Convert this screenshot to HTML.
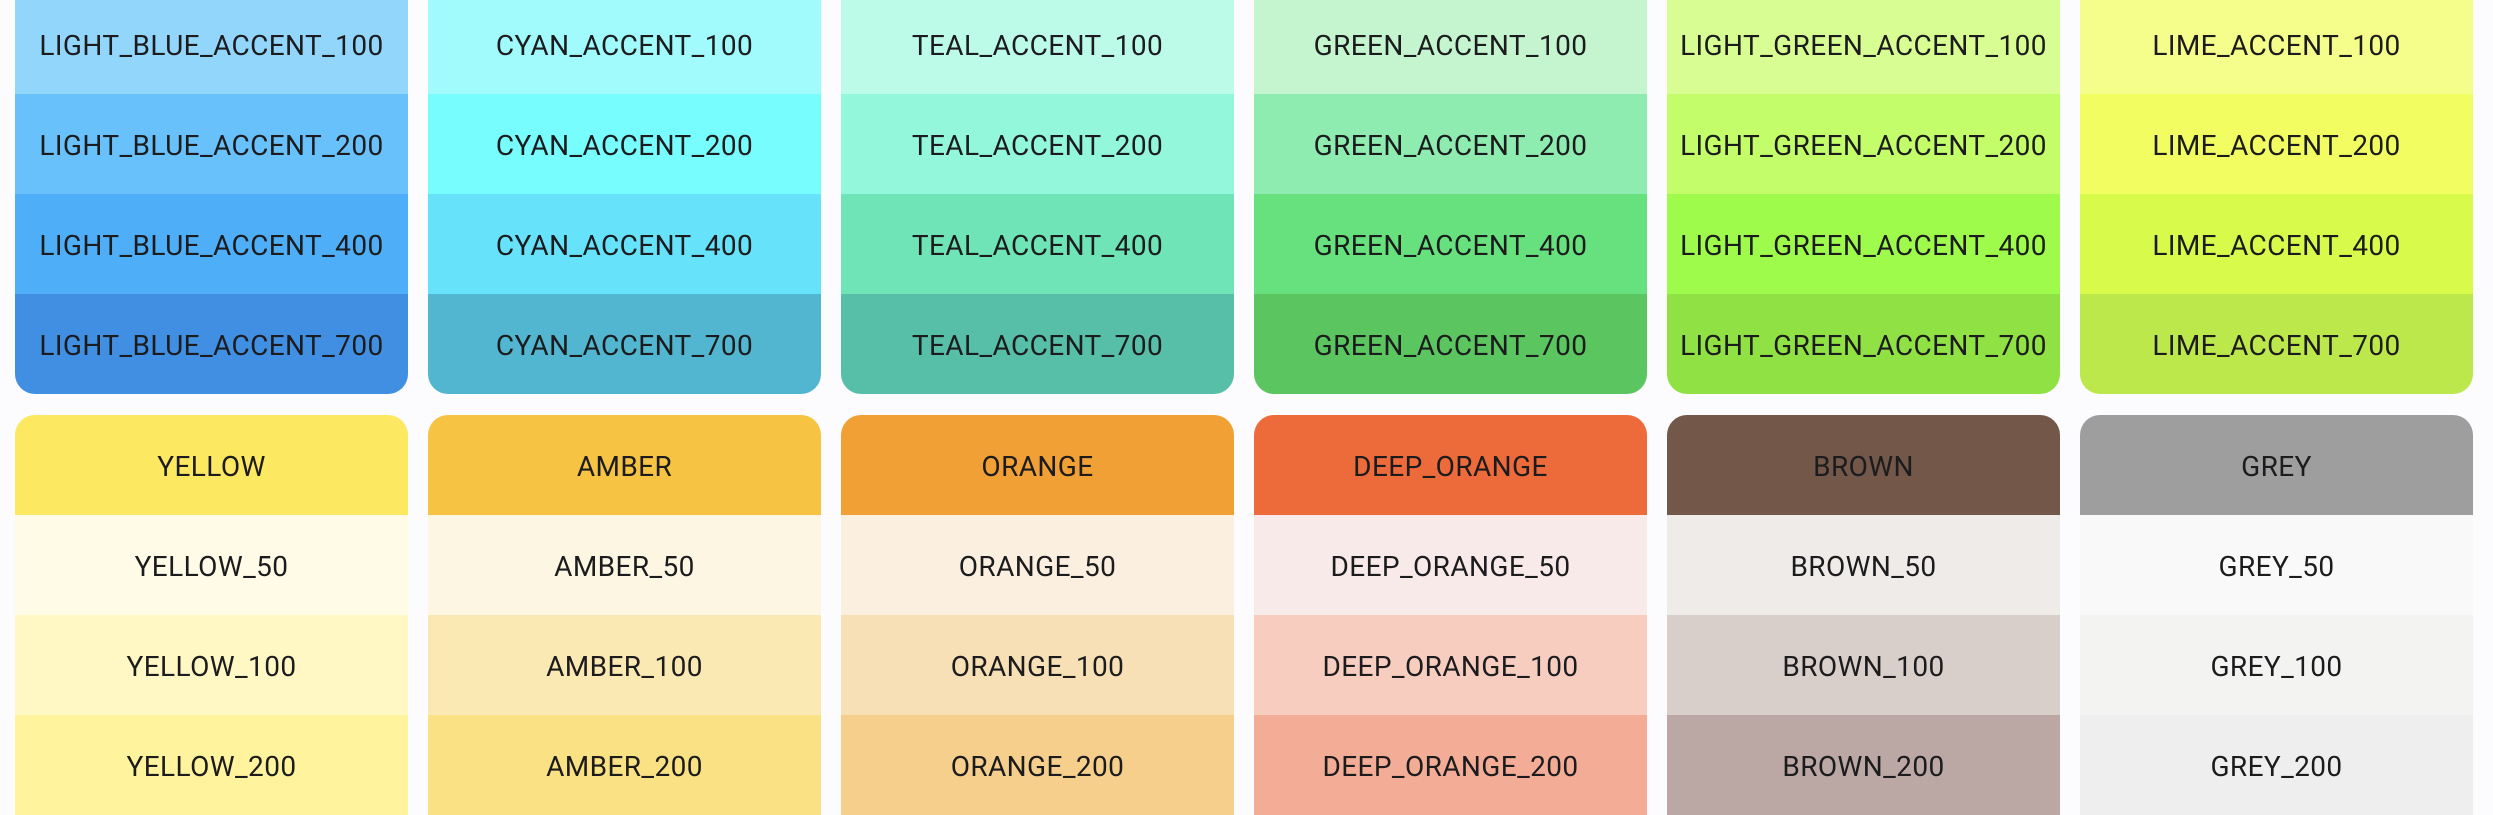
<!DOCTYPE html>
<html><head><meta charset="utf-8"><style>
body{margin:0;width:2493px;height:815px;background:#fcfbfd;position:relative;overflow:hidden;font-family:"Roboto","Liberation Sans",sans-serif}
.card{position:absolute;width:393px;overflow:hidden}
.r{height:100px;box-sizing:border-box;padding-top:3px;display:flex;align-items:center;justify-content:center;font-size:28px;color:#1c1c1e;letter-spacing:0.4px}
.top{top:-6px;border-radius:0 0 20px 20px}
.bot{top:415px;border-radius:20px 20px 0 0}
</style></head><body>
<div class="card top" style="left:15px"><div class="r" style="background:#93d6fc">LIGHT_BLUE_ACCENT_100</div><div class="r" style="background:#68c1fa">LIGHT_BLUE_ACCENT_200</div><div class="r" style="background:#4faef8">LIGHT_BLUE_ACCENT_400</div><div class="r" style="background:#418fe3">LIGHT_BLUE_ACCENT_700</div></div>
<div class="card top" style="left:428px"><div class="r" style="background:#a1fbfc">CYAN_ACCENT_100</div><div class="r" style="background:#77fdfd">CYAN_ACCENT_200</div><div class="r" style="background:#67e2fb">CYAN_ACCENT_400</div><div class="r" style="background:#52b6d0">CYAN_ACCENT_700</div></div>
<div class="card top" style="left:841px"><div class="r" style="background:#bcfbe8">TEAL_ACCENT_100</div><div class="r" style="background:#93f7db">TEAL_ACCENT_200</div><div class="r" style="background:#6ee4b7">TEAL_ACCENT_400</div><div class="r" style="background:#57bea7">TEAL_ACCENT_700</div></div>
<div class="card top" style="left:1254px"><div class="r" style="background:#c4f5cf">GREEN_ACCENT_100</div><div class="r" style="background:#8eecb0">GREEN_ACCENT_200</div><div class="r" style="background:#67e17d">GREEN_ACCENT_400</div><div class="r" style="background:#5bc55f">GREEN_ACCENT_700</div></div>
<div class="card top" style="left:1667px"><div class="r" style="background:#d7fd93">LIGHT_GREEN_ACCENT_100</div><div class="r" style="background:#c3fd69">LIGHT_GREEN_ACCENT_200</div><div class="r" style="background:#9efb4b">LIGHT_GREEN_ACCENT_400</div><div class="r" style="background:#90e143">LIGHT_GREEN_ACCENT_700</div></div>
<div class="card top" style="left:2080px"><div class="r" style="background:#f5fd8b">LIME_ACCENT_100</div><div class="r" style="background:#f1fd60">LIME_ACCENT_200</div><div class="r" style="background:#d8fb4b">LIME_ACCENT_400</div><div class="r" style="background:#bde84c">LIME_ACCENT_700</div></div>

<div class="card bot" style="left:15px"><div class="r" style="background:#fde862">YELLOW</div><div class="r" style="background:#fffbe6">YELLOW_50</div><div class="r" style="background:#fff8c5">YELLOW_100</div><div class="r" style="background:#fff49d">YELLOW_200</div></div>
<div class="card bot" style="left:428px"><div class="r" style="background:#f6c343">AMBER</div><div class="r" style="background:#fdf6e2">AMBER_50</div><div class="r" style="background:#fbe9b3">AMBER_100</div><div class="r" style="background:#fae184">AMBER_200</div></div>
<div class="card bot" style="left:841px"><div class="r" style="background:#f0a035">ORANGE</div><div class="r" style="background:#fbf0e0">ORANGE_50</div><div class="r" style="background:#f8e0b6">ORANGE_100</div><div class="r" style="background:#f6cf8c">ORANGE_200</div></div>
<div class="card bot" style="left:1254px"><div class="r" style="background:#ed6a3b">DEEP_ORANGE</div><div class="r" style="background:#f8eae8">DEEP_ORANGE_50</div><div class="r" style="background:#f7cdc0">DEEP_ORANGE_100</div><div class="r" style="background:#f3ad96">DEEP_ORANGE_200</div></div>
<div class="card bot" style="left:1667px"><div class="r" style="background:#735749">BROWN</div><div class="r" style="background:#eeebe8">BROWN_50</div><div class="r" style="background:#d8ceca">BROWN_100</div><div class="r" style="background:#bba8a4">BROWN_200</div></div>
<div class="card bot" style="left:2080px"><div class="r" style="background:#9e9e9e">GREY</div><div class="r" style="background:#faf9fa">GREY_50</div><div class="r" style="background:#f3f4f2">GREY_100</div><div class="r" style="background:#eeeeee">GREY_200</div></div>
</body></html>
